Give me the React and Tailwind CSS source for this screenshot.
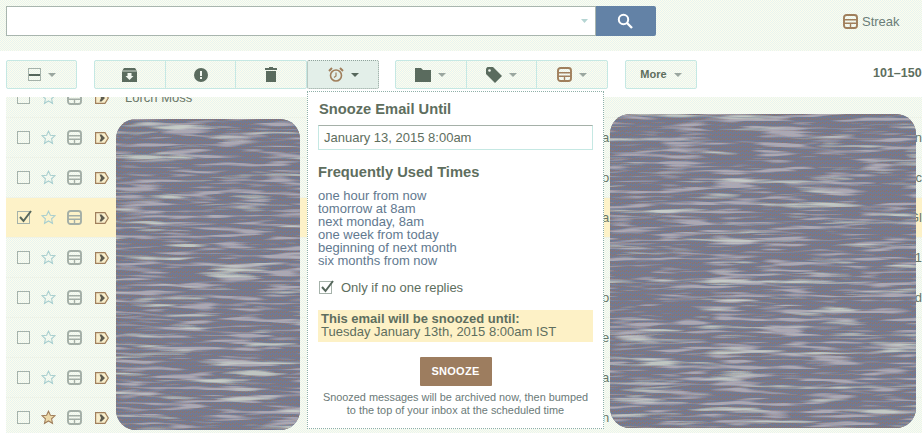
import React from "react";

const dither = "bg-[repeating-conic-gradient(#fefcec_0_25%,#e6f4f1_0_50%)] bg-[length:2px_2px]";

function StreakIcon({ size = 15, color = "#a3aea6" }) {
  return (
    <svg width={size} height={size} viewBox="0 0 15 15" fill="none" aria-hidden="true">
      <rect x="1" y="1" width="13" height="13" rx="2.500" stroke={color} strokeWidth="1.900" />
      <path d="M1 5.800h13M1 9.200h13M7.500 9.200V14" stroke={color} strokeWidth="1.400" />
    </svg>
  );
}

function Star({ filled }) {
  return (
    <svg width="15" height="15" viewBox="0 0 15 15" aria-hidden="true">
      <path
        d="M7.500 1.200l1.900 4.100 4.500.5-3.300 3 .9 4.500-4-2.300-4 2.300.9-4.500-3.300-3 4.500-.5z"
        fill={filled ? "#ecd9a8" : "none"}
        stroke={filled ? "#a07f5c" : "#a9cfcf"}
        strokeWidth="1.100"
      />
    </svg>
  );
}

function Importance() {
  return (
    <svg width="14" height="12" viewBox="0 0 14 12" aria-hidden="true">
      <path d="M.6.600h9.400l3.300 5.400-3.300 5.400H.6z" fill="#f8eecb" stroke="#a07f5c" strokeWidth="1.200" />
      <path d="M4.500 2.500h2L10 6 6.500 9.500h-2L6 6z" fill="#5d5b4f" />
    </svg>
  );
}

function Caret({ color = "#9aa69f" }) {
  return (
    <svg width="8" height="4" viewBox="0 0 8 4" aria-hidden="true">
      <path d="M0 0h8L4 4z" fill={color} />
    </svg>
  );
}

function Check({ checked }) {
  return (
    <span className="relative block w-[13px] h-[13px] border border-[#a5b2aa]">
      {checked && (
        <svg className="absolute -top-[3px] -left-px" width="17" height="15" viewBox="0 0 17 15" aria-hidden="true">
          <path d="M3 8l3.500 4L14 2" fill="none" stroke="#56675c" strokeWidth="2" />
        </svg>
      )}
    </span>
  );
}

const rows = [
  { sender: "Lorch Moss", left: "", right: "" },
  { left: "ab", right: "en" },
  { left: "or", right: "c" },
  { left: "a", right: "Gl", sel: true },
  { left: "", right: "1" },
  { left: "or", right: "nd" },
  { left: "e", right: "" },
  { left: "a,", right: "" },
  { left: "n", right: "", star: true },
];

function Row({ r }) {
  return (
    <div
      className={`flex items-center h-10 ml-[6px] border-b border-[#eef3e8] ${
        r.sel ? "bg-[#fdf2c8]" : dither
      }`}
    >
      <span className="ml-[11px] w-[24px]"><Check checked={r.sel} /></span>
      <span className="w-[26px]"><Star filled={r.star} /></span>
      <span className="w-[28px]"><StreakIcon size={15} /></span>
      <span className="w-[30px]"><Importance /></span>
      <span className="flex-1 text-[13px] text-[#6a7768]">{r.sender}</span>
      <span className="w-[320px] flex justify-between text-[13px] text-[#6a7768]">
        <span>{r.left}</span>
        <span>{r.right}</span>
      </span>
    </div>
  );
}

function Blob({ id, seed, className }) {
  return (
    <div className={`absolute overflow-hidden rounded-[20px] bg-[#7c7a80] ${className}`}>
      <svg width="100%" height="100%" aria-hidden="true">
        <defs>
          <pattern id={`${id}p`} width="4" height="4" patternUnits="userSpaceOnUse">
            <rect width="4" height="4" fill="#77798a" />
            <rect width="1" height="1" fill="#8f7664" />
            <rect x="2" y="1" width="1" height="1" fill="#8f7664" />
            <rect x="1" y="2" width="1" height="1" fill="#62809f" />
            <rect x="3" y="3" width="1" height="1" fill="#62809f" />
            <rect x="1" width="1" height="1" fill="#7f7196" />
            <rect x="3" y="2" width="1" height="1" fill="#7f7196" />
          </pattern>
          <filter id={`${id}f`} x="0" y="0" width="100%" height="100%">
            <feTurbulence type="fractalNoise" baseFrequency="0.012 0.17" numOctaves="3" seed={seed} />
            <feColorMatrix values="0 0 0 0 0.6  0 0 0 0 0.65  0 0 0 0 0.6  5 0 0 0 -3" />
          </filter>
          <filter id={`${id}g`} x="0" y="0" width="100%" height="100%">
            <feTurbulence type="fractalNoise" baseFrequency="0.02 0.25" numOctaves="2" seed={seed + 11} />
            <feColorMatrix values="0 0 0 0 0.53  0 0 0 0 0.5  0 0 0 0 0.56  0 5 0 0 -2.500" />
          </filter>
        </defs>
        <rect width="100%" height="100%" fill={`url(#${id}p)`} />
        <rect width="100%" height="100%" filter={`url(#${id}g)`} opacity="0.7" />
        <rect width="100%" height="100%" filter={`url(#${id}f)`} opacity="0.85" />
      </svg>
    </div>
  );
}

const Ic = {
  archive: (
    <svg width="15" height="14" viewBox="0 0 15 14" aria-hidden="true">
      <path d="M2 0h11l2 3v11H0V3z" fill="#5a6b5e" />
      <path d="M0 3h15" stroke="#eef5ee" strokeWidth="0.800" />
      <path d="M5.500 5h4v3h2L7.500 12l-4-4h2z" fill="#f2f7f0" />
    </svg>
  ),
  spam: (
    <svg width="14" height="14" viewBox="0 0 14 14" aria-hidden="true">
      <circle cx="7" cy="7" r="7" fill="#5a6b5e" />
      <rect x="6" y="3" width="2" height="5" fill="#f2f7f0" />
      <rect x="6" y="9" width="2" height="2" fill="#f2f7f0" />
    </svg>
  ),
  trash: (
    <svg width="12" height="15" viewBox="0 0 12 15" aria-hidden="true">
      <path d="M4 0h4v1h4v2H0V1h4z" fill="#5a6b5e" />
      <path d="M1 4h10v11H1z" fill="#5a6b5e" />
    </svg>
  ),
  clock: (
    <svg width="16" height="15" viewBox="0 0 16 15" fill="none" aria-hidden="true">
      <circle cx="8" cy="8.500" r="5.500" stroke="#a07f5c" strokeWidth="1.600" />
      <path d="M8 5.500v3.500l-2 1.500" stroke="#a07f5c" strokeWidth="1.200" />
      <path d="M1 4l3-3M15 4l-3-3" stroke="#a07f5c" strokeWidth="2" />
    </svg>
  ),
  folder: (
    <svg width="16" height="14" viewBox="0 0 16 14" aria-hidden="true">
      <path d="M0 0h6l2 2h8v12H0z" fill="#5a6b5e" />
    </svg>
  ),
  tag: (
    <svg width="16" height="16" viewBox="0 0 16 16" aria-hidden="true">
      <path d="M0 1.500 1.500 0H7l9 9-7 7-9-9z" fill="#5a6b5e" />
      <circle cx="3.500" cy="3.500" r="1.300" fill="#f2f7f0" />
    </svg>
  ),
};

function Btn({ children, className = "" }) {
  return (
    <div className={`flex flex-1 items-center justify-center gap-[7px] h-full ${className}`}>
      {children}
    </div>
  );
}

export default function App() {
  return (
    <div className="relative w-[922px] h-[433px] overflow-hidden bg-white font-['Liberation_Sans',Arial,sans-serif]">
      {/* header */}
      <header className={`flex items-start h-[51px] pt-[6px] pl-[6px] ${dither}`}>
        <div className="w-[590px] h-[30px] bg-white border border-[#a8b5ae] flex items-center justify-end pr-[7px]">
          <svg width="7" height="4" viewBox="0 0 7 4" aria-hidden="true"><path d="M0 0h7L3.500 4z" fill="#b5d5d3" /></svg>
        </div>
        <button className="w-[60px] h-[30px] bg-[#6382a6] rounded-r-[2px] flex items-center justify-center pr-[2px]">
          <svg width="16" height="16" viewBox="0 0 16 16" fill="none" aria-hidden="true">
            <circle cx="6.500" cy="6.500" r="4.700" stroke="#fff" strokeWidth="2" />
            <path d="M10 10l5 5" stroke="#fff" strokeWidth="2.400" />
          </svg>
        </button>
        <div className="ml-[187px] mt-[6px] flex items-center gap-[4px] text-[13px] text-[#6b7d78]">
          <StreakIcon size={15} color="#a07f5c" />
          <span>Streak</span>
        </div>
      </header>

      {/* toolbar */}
      <div className="relative z-10 flex items-start h-[46px] bg-white pt-[9px] pl-[6px]">
        <div className={`flex w-[71px] h-[29px] border border-[#c5e8e3] rounded-[2px] ${dither}`}>
          <Btn>
            <span className="flex items-center w-[13px] h-[13px] border border-[#a5b2aa]"><span className="block w-full h-[2px] bg-[#56675c]" /></span>
            <Caret />
          </Btn>
        </div>
        <div className={`ml-[17px] flex w-[213px] h-[29px] border border-[#c5e8e3] rounded-[2px] ${dither}`}>
          <Btn className="border-r border-[#c5e8e3]">{Ic.archive}</Btn>
          <Btn className="border-r border-[#c5e8e3]">{Ic.spam}</Btn>
          <Btn>{Ic.trash}</Btn>
        </div>
        <div className="flex w-[72px] h-[29px] border border-dotted border-[#8fa39b] rounded-[2px] bg-[#e3efe9]">
          <Btn>{Ic.clock}<Caret color="#56675c" /></Btn>
        </div>
        <div className={`ml-[16px] flex w-[213px] h-[29px] border border-[#c5e8e3] rounded-[2px] ${dither}`}>
          <Btn className="border-r border-[#c5e8e3]">{Ic.folder}<Caret /></Btn>
          <Btn className="border-r border-[#c5e8e3]">{Ic.tag}<Caret /></Btn>
          <Btn><StreakIcon size={15} color="#a07f5c" /><Caret /></Btn>
        </div>
        <div className={`ml-[17px] flex w-[72px] h-[29px] border border-[#c5e8e3] rounded-[2px] ${dither}`}>
          <Btn className="gap-[3px] text-[11px] font-bold text-[#5e6e5e]">More<Caret /></Btn>
        </div>
        <span className="absolute left-[873px] top-[13px] text-[12.5px] font-bold text-[#5e6e5e] whitespace-nowrap">101–150</span>
      </div>

      {/* list */}
      <div className="-mt-[19px]">
        {rows.map((r, i) => <Row key={i} r={r} />)}
      </div>

      <Blob id="a" seed={3} className="left-[116px] top-[119px] w-[184px] h-[311px]" />
      <Blob id="b" seed={8} className="left-[610px] top-[114px] w-[306px] h-[314px]" />

      {/* snooze popup */}
      <div className="absolute z-20 left-[307px] top-[91px] w-[297px] h-[338px] bg-white border border-dotted border-[#8fb0a8] pl-[10px] pr-[10px] text-[#5e6e5e]">
        <h2 className="mt-[9px] pl-px text-[14.7px] leading-[17px] font-bold">Snooze Email Until</h2>
        <div className="mt-[7px] w-[275px] h-[25px] flex items-center pl-[5px] border border-[#c5e8e3] border-t-[#a5b0a8] text-[13px] text-[#5e6e5e]">
          January 13, 2015 8:00am
        </div>
        <h2 className="mt-[14px] text-[14.7px] leading-[17px] font-bold">Frequently Used Times</h2>
        <ul className="mt-[8px] text-[13px] leading-[13px] text-[#62798f]">
          <li>one hour from now</li>
          <li>tomorrow at 8am</li>
          <li>next monday, 8am</li>
          <li>one week from today</li>
          <li>beginning of next month</li>
          <li>six months from now</li>
        </ul>
        <label className="mt-[13px] flex items-center gap-[9px] pl-px text-[13px] leading-[15px]">
          <Check checked />
          <span>Only if no one replies</span>
        </label>
        <div className="mt-[15px] w-[275px] h-[32px] bg-[#fdf1c6] pl-[3px] pt-[2px] text-[13px] leading-[13px]">
          <div className="font-bold">This email will be snoozed until:</div>
          <div>Tuesday January 13th, 2015 8:00am IST</div>
        </div>
        <button className="block mx-auto mt-[15px] w-[72px] h-[29px] bg-[#9d7d5f] rounded-[1px] text-[11px] font-bold tracking-[0.3px] text-white">
          SNOOZE
        </button>
        <p className="mt-[5px] text-center text-[10.900px] leading-[13px] text-[#6b7a78]">
          Snoozed messages will be archived now, then bumped<br />to the top of your inbox at the scheduled time
        </p>
      </div>
    </div>
  );
}
